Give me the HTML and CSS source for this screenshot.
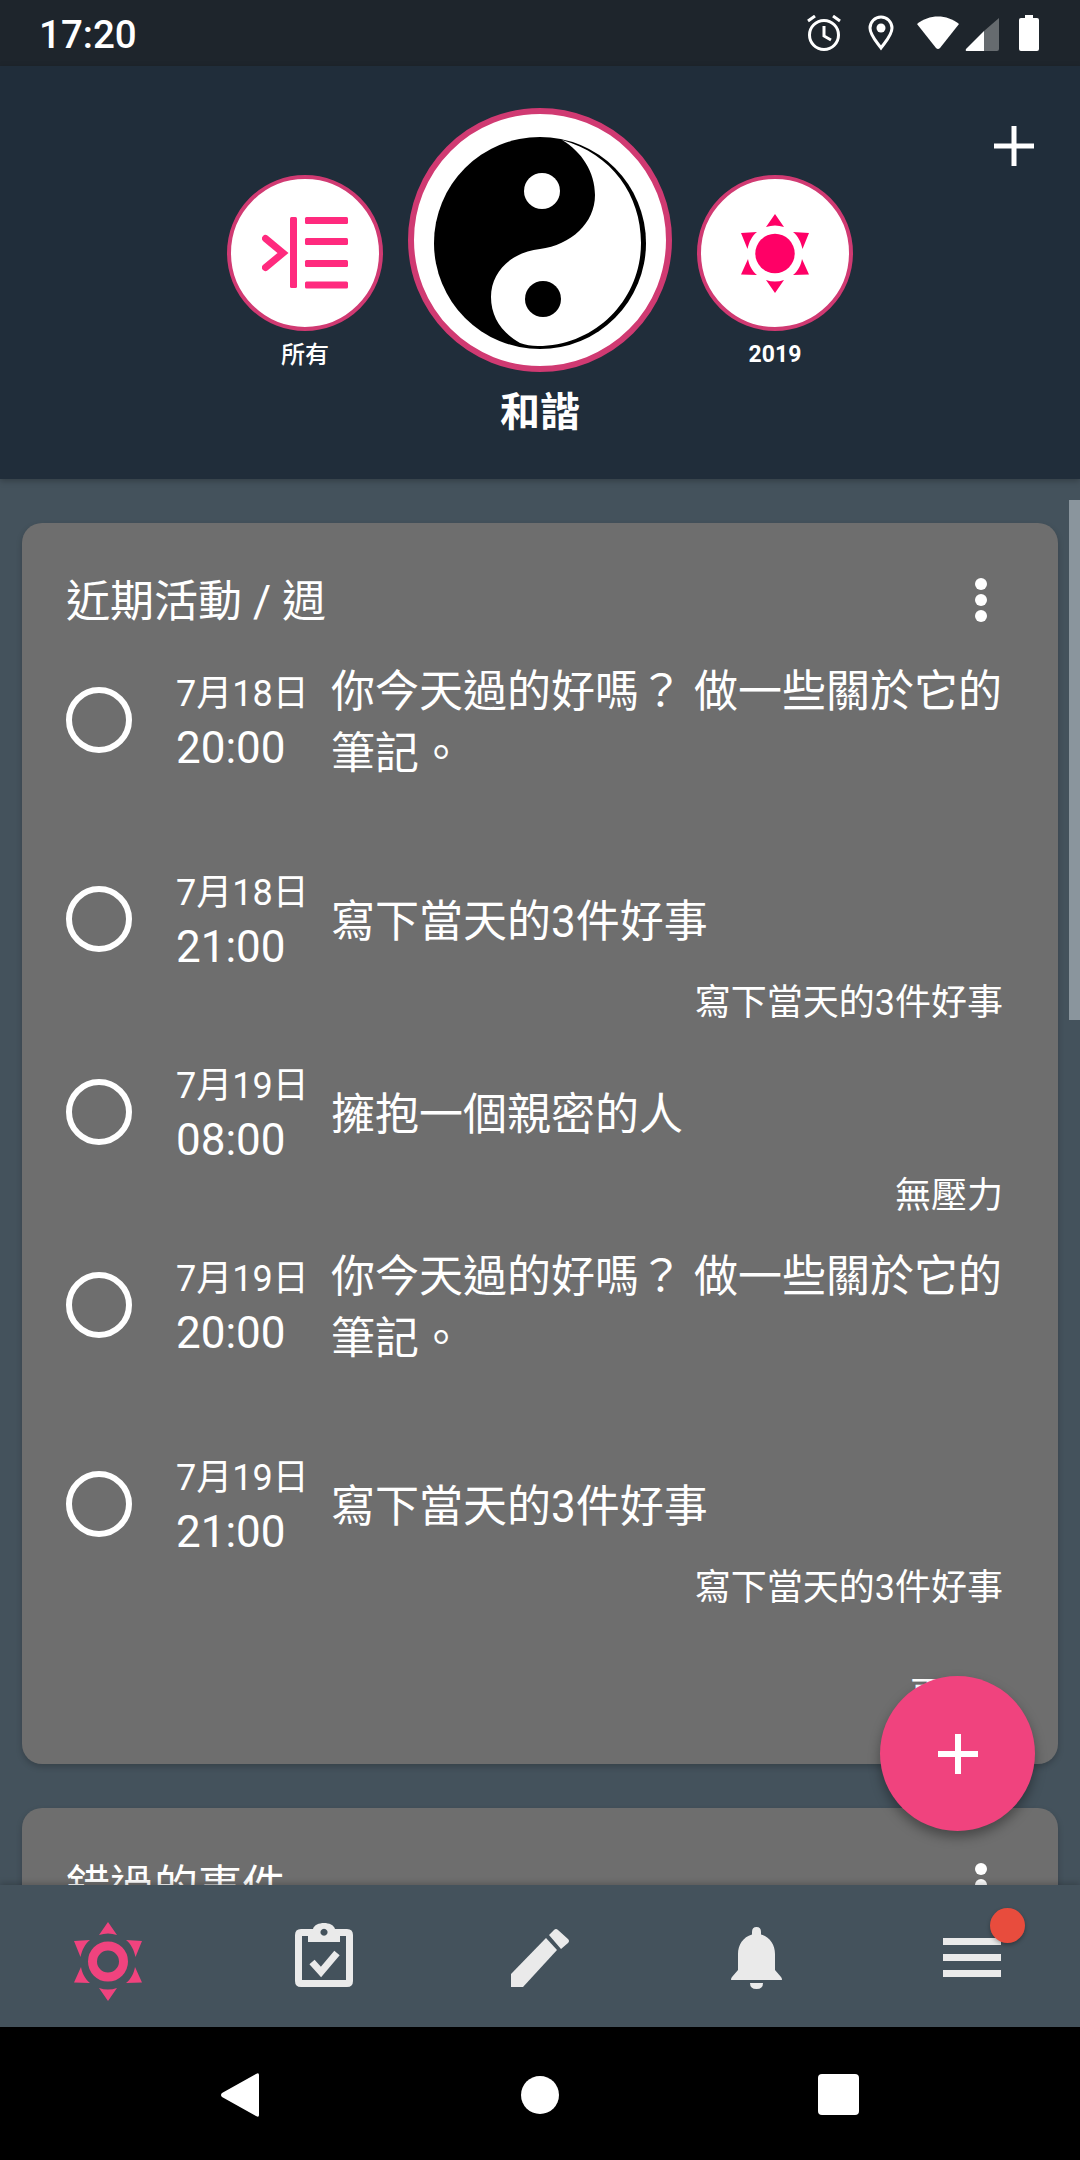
FILE: index.html
```html
<!DOCTYPE html>
<html lang="zh-Hant">
<head>
  <meta charset="UTF-8" />
  <meta name="viewport" content="width=device-width, initial-scale=1.0" />
  <title>和諧</title>
  <link rel="stylesheet" href="styles.css">
</head>

<body>
  <svg class="defs" width="0" height="0">
    <symbol id="sun" viewBox="0 0 68 79">
      <path d="M34 0 L43 13 Q34 10 25 13 Z" />
      <path d="M34 79 L43 66 Q34 69 25 66 Z" />
      <path d="M0 19 L16 18 C11 22 8 28 6.500 35 Z" />
      <path d="M68 19 L52 18 C57 22 60 28 61.500 35 Z" />
      <path d="M0 60.500 L16 61 C11 57 8 51 7 45 Z" />
      <path d="M68 60.500 L52 61 C57 57 60 51 61 45 Z" />
    </symbol>
  </svg>

  <div class="page">
    <div class="status-bar">
      <span class="clock">17:20</span>
      <div class="status-icons">
        <svg class="icon-alarm" viewBox="0 0 34 36"><path d="M1 6 L8 1 M33 6 L26 1" /><circle cx="17" cy="20" r="14.500" /><path d="M17 11 V21 L24 25" /></svg>
        <svg class="icon-pin" viewBox="0 0 26 36"><path d="M13 33 C8 26 2 20 2 13 A11 11 0 0 1 24 13 C24 20 18 26 13 33 Z" /><circle class="solid" cx="13" cy="13" r="4.500" /></svg>
        <svg class="icon-wifi" viewBox="0 0 42 34"><path d="M0 8 C12 -2 30 -2 42 8 L23 32 Q21 34 19 32 Z" /></svg>
        <svg class="icon-signal" viewBox="0 0 34 34"><path class="dim" d="M34 1 V32 Q34 34 32 34 H19 V14 Z" /><path d="M19 14 V34 H2 Q0 34 1 32 Z" /></svg>
        <svg class="icon-battery" viewBox="0 0 20 36"><path d="M6 0 H14 V3 H18 Q20 3 20 5 V34 Q20 36 18 36 H2 Q0 36 0 34 V5 Q0 3 2 3 H6 Z" /></svg>
      </div>
    </div>

    <header class="top-bar">
      <div class="goal goal-side">
        <div class="ring ring-small">
          <svg class="icon-list" viewBox="0 0 86 72">
            <path class="chev" d="M3.500 21.500 L21 36 L3.500 50.500" />
            <rect x="28" y="0" width="7" height="71" rx="1.500" />
            <rect x="43" y="0" width="43" height="7" rx="1.500" />
            <rect x="43" y="21" width="43" height="7" rx="1.500" />
            <rect x="43" y="43" width="43" height="7" rx="1.500" />
            <rect x="43" y="64.500" width="43" height="7" rx="1.500" />
          </svg>
        </div>
        <span class="goal-label">所有</span>
      </div>

      <div class="goal goal-main">
        <div class="ring ring-big">
          <svg class="icon-yin" viewBox="0 0 212 212">
            <circle cx="106" cy="106" r="106" />
            <path class="white" d="M128 3 C178 17 207 58 207 106 C207 163 161 209 104 209 Q94 209 86 206 C68 196 57 180 57 160 C57 134 78 115 106 112 C137 108 161 86 161 58 C161 35 148 15 128 3 Z" />
            <circle class="white" cx="108" cy="54" r="18" />
            <circle cx="109" cy="162" r="18" />
          </svg>
        </div>
        <span class="goal-title">和諧</span>
      </div>

      <div class="goal goal-side">
        <div class="ring ring-small">
          <svg class="icon-sun" viewBox="0 0 68 79"><use href="#sun" /><circle cx="34" cy="39.500" r="19.700" /></svg>
        </div>
        <span class="goal-label goal-year">2019</span>
      </div>

      <svg class="header-add" viewBox="0 0 40 40"><path d="M20 0 V40 M0 20 H40" /></svg>
    </header>

    <main class="content">
      <section class="card card-first">
        <div class="card-head">
          <h2>近期活動 / 週</h2>
          <div class="dots"><i></i><i></i><i></i></div>
        </div>

        <div class="event event-long">
          <div class="event-row">
            <span class="radio"></span>
            <div class="when"><span class="date">7月18日</span><span class="time">20:00</span></div>
            <p class="what">你今天過的好嗎？ 做一些關於它的筆記。</p>
          </div>
        </div>

        <div class="event">
          <div class="event-row">
            <span class="radio"></span>
            <div class="when"><span class="date">7月18日</span><span class="time">21:00</span></div>
            <p class="what">寫下當天的3件好事</p>
          </div>
          <p class="note">寫下當天的3件好事</p>
        </div>

        <div class="event">
          <div class="event-row">
            <span class="radio"></span>
            <div class="when"><span class="date">7月19日</span><span class="time">08:00</span></div>
            <p class="what">擁抱一個親密的人</p>
          </div>
          <p class="note">無壓力</p>
        </div>

        <div class="event event-long">
          <div class="event-row">
            <span class="radio"></span>
            <div class="when"><span class="date">7月19日</span><span class="time">20:00</span></div>
            <p class="what">你今天過的好嗎？ 做一些關於它的筆記。</p>
          </div>
        </div>

        <div class="event">
          <div class="event-row">
            <span class="radio"></span>
            <div class="when"><span class="date">7月19日</span><span class="time">21:00</span></div>
            <p class="what">寫下當天的3件好事</p>
          </div>
          <p class="note">寫下當天的3件好事</p>
        </div>

        <p class="more">更多</p>
      </section>

      <section class="card">
        <div class="card-head">
          <h2>錯過的事件</h2>
          <div class="dots"><i></i><i></i><i></i></div>
        </div>
      </section>

      <div class="scroll-thumb"></div>
      <div class="fab"><svg viewBox="0 0 40 40"><path d="M20 0 V40 M0 20 H40" /></svg></div>
    </main>

    <nav class="tab-bar">
      <div class="tab">
        <svg class="icon-tab-sun" viewBox="0 0 68 79"><use href="#sun" /><circle cx="34" cy="39.500" r="15.500" /></svg>
      </div>
      <div class="tab">
        <svg class="icon-clip" viewBox="0 0 58 64">
          <path fill-rule="evenodd" d="M6 6 H18 C20 -2 38 -2 40 6 H52 Q58 6 58 12 V58 Q58 64 52 64 H6 Q0 64 0 58 V12 Q0 6 6 6 Z M7 13 V57 H51 V13 H45 V19 H13 V13 Z M29 5.800 A3.500 3.500 0 1 0 29.010 5.800 Z" />
          <path class="tick" d="M17 39 L26 49 L42 30" />
        </svg>
      </div>
      <div class="tab">
        <svg class="icon-pencil" viewBox="0 0 58 58"><path d="M0 45 L35 9 L46 21 L12 58 H0 Z" /><path d="M38 6 L43 1 Q45 -1 47 1 L57 10 Q59 12 57 14 L50 20 Z" /></svg>
      </div>
      <div class="tab">
        <svg class="icon-bell" viewBox="0 0 51 62"><path d="M25.500 0 Q30 0 30 5 V7.500 C39 10 44 18 44 27 V43 L50 50 Q51 51 51 53 H0 Q0 51 1 50 L7 43 V27 C7 18 12 10 21 7.500 V5 Q21 0 25.500 0 Z" /><path d="M19 56 H32 Q32 62 25.500 62 Q19 62 19 56 Z" /></svg>
      </div>
      <div class="tab tab-menu">
        <div class="menu-lines"><i></i><i></i><i></i></div>
        <span class="badge"></span>
      </div>
    </nav>

    <div class="nav-bar">
      <svg class="nav-back" viewBox="0 0 38 44"><path d="M38 2 V42 Q38 45 35 43 L1 24 Q-1 22 1 20 L35 1 Q38 -1 38 2 Z" /></svg>
      <span class="nav-home"></span>
      <span class="nav-recent"></span>
    </div>
  </div>
</body>
</html>
```

FILE: styles.css
```css
* {
  box-sizing: border-box;
}

body {
  margin: 0;
  font-family: Roboto, 'Noto Sans CJK TC', sans-serif;
  color: #fff;
  background: #44525c;
}

h2, p {
  margin: 0;
  font-weight: 400;
}

.defs {
  position: absolute;
}

.page {
  width: 1080px;
  height: 2160px;
  display: flex;
  flex-direction: column;
  overflow: hidden;
}

/* status bar */
.status-bar {
  height: 66px;
  flex: none;
  display: flex;
  align-items: center;
  justify-content: space-between;
  padding: 0 41px 0 39px;
  background: #1e252c;
}

.clock {
  font-size: 38.500px;
  font-weight: 500;
  padding-top: 3px;
}

.status-icons {
  display: flex;
  align-items: center;
}

.status-icons svg {
  display: block;
  fill: #fff;
}

.icon-alarm {
  width: 34px;
  height: 36px;
  fill: none !important;
  stroke: #fff;
  stroke-width: 3;
  margin-right: 27px;
}

.icon-pin {
  width: 26px;
  height: 36px;
  fill: none !important;
  stroke: #fff;
  stroke-width: 3;
  margin-right: 23px;
}

.icon-pin .solid {
  fill: #fff;
  stroke: none;
}

.icon-wifi {
  width: 42px;
  height: 34px;
  margin-right: 6px;
}

.icon-signal {
  width: 34px;
  height: 34px;
  margin: 2px 20px 0 0;
}

.icon-signal .dim {
  fill: #666b6f;
}

.icon-battery {
  width: 20px;
  height: 36px;
}

/* goal switcher */
.top-bar {
  position: relative;
  height: 413px;
  flex: none;
  display: flex;
  justify-content: center;
  align-items: flex-start;
  gap: 25px;
  padding: 42px 0 0;
  background: #202d3a;
  box-shadow: 0 2px 6px rgba(0,0,0,0.25);
  z-index: 2;
}

.goal {
  display: flex;
  flex-direction: column;
  align-items: center;
}

.goal-side {
  margin-top: 67px;
}

.ring {
  display: flex;
  align-items: center;
  justify-content: center;
  border-radius: 50%;
  background: #fff;
  border-style: solid;
  border-color: #d03a72;
}

.ring-small {
  width: 156px;
  height: 156px;
  border-width: 4px;
}

.ring-big {
  width: 264px;
  height: 264px;
  border-width: 6px;
}

.goal-label {
  margin-top: 8px;
  font-size: 24px;
  line-height: 32px;
  font-weight: 500;
}

.goal-year {
  font-size: 23px;
  font-weight: 700;
}

.goal-title {
  margin-top: 13px;
  font-size: 40px;
  line-height: 56px;
  font-weight: 700;
}

.icon-list {
  width: 86px;
  height: 72px;
  fill: #ff2a7e;
}

.icon-list .chev {
  fill: none;
  stroke: #ff2a7e;
  stroke-width: 7;
  stroke-linecap: round;
}

.icon-yin {
  width: 212px;
  height: 212px;
  margin-top: 5px;
}

.icon-yin .white {
  fill: #fff;
}

.icon-sun {
  width: 68px;
  height: 79px;
  fill: #ff0066;
}

.header-add {
  position: absolute;
  left: 994px;
  top: 60px;
  width: 40px;
  height: 40px;
  stroke: #fff;
  stroke-width: 5;
}

/* cards */
.content {
  position: relative;
  flex: 1;
  overflow: hidden;
  padding: 44px 22px 0;
}

.card {
  background: #6e6e6e;
  border-radius: 20px;
  padding: 0 44px;
  box-shadow: 0 3px 6px rgba(0,0,0,0.2);
  margin-bottom: 44px;
  min-height: 200px;
}

.card-first {
  position: relative;
  height: 1241px;
}

.card-head {
  height: 135px;
  padding-top: 49px;
  display: flex;
  justify-content: space-between;
}

.card-head h2 {
  font-size: 44px;
  line-height: 60px;
}

.dots {
  display: flex;
  flex-direction: column;
  gap: 4px;
  margin: 6px 27px 0 0;
}

.dots i {
  width: 12px;
  height: 12px;
  border-radius: 50%;
  background: #fff;
}

.event {
  height: 193px;
}

.event-long {
  height: 199px;
}

.event-row {
  height: 124px;
  display: flex;
  align-items: center;
}

.radio {
  width: 66px;
  height: 66px;
  flex: none;
  border: 6px solid #fff;
  border-radius: 50%;
  margin-right: 44px;
}

.when {
  width: 155px;
  flex: none;
  display: flex;
  flex-direction: column;
  padding-top: 2px;
}

.date {
  font-size: 36px;
  line-height: 54px;
  white-space: nowrap;
}

.time {
  font-size: 44px;
  line-height: 54px;
}

.what {
  font-size: 44px;
  line-height: 62px;
  padding-top: 6px;
}

.note {
  margin-top: -1px;
  font-size: 36px;
  line-height: 46px;
  text-align: right;
  padding-right: 11px;
}

.more {
  position: absolute;
  right: 76px;
  top: 1150px;
  font-size: 36px;
  line-height: 46px;
}

.scroll-thumb {
  position: absolute;
  right: 0;
  top: 21px;
  width: 11px;
  height: 520px;
  background: #8a959d;
}

.fab {
  position: absolute;
  left: 880px;
  top: 1197px;
  width: 155px;
  height: 155px;
  border-radius: 50%;
  background: #f0437e;
  box-shadow: 0 6px 12px rgba(0,0,0,0.35);
  display: flex;
  align-items: center;
  justify-content: center;
}

.fab svg {
  width: 40px;
  height: 40px;
  stroke: #fff;
  stroke-width: 6;
}

/* bottom tabs */
.tab-bar {
  height: 142px;
  flex: none;
  display: flex;
  background: #44525c;
  box-shadow: 0 -2px 6px rgba(0,0,0,0.2);
  z-index: 2;
}

.tab {
  position: relative;
  flex: 1;
  display: flex;
  align-items: center;
  justify-content: center;
}

.icon-tab-sun {
  width: 68px;
  height: 79px;
  fill: #f0437e;
  margin-top: 11px;
}

.icon-tab-sun circle {
  fill: none;
  stroke: #f0437e;
  stroke-width: 9;
}

.icon-clip {
  width: 58px;
  height: 64px;
  fill: #eaeaea;
  margin-bottom: 2px;
}

.icon-clip .tick {
  fill: none;
  stroke: #eaeaea;
  stroke-width: 7;
}

.icon-pencil {
  width: 58px;
  height: 58px;
  fill: #eaeaea;
  margin-top: 3px;
}

.icon-bell {
  width: 51px;
  height: 62px;
  fill: #eaeaea;
  margin-top: 4px;
}

.menu-lines {
  display: flex;
  flex-direction: column;
  gap: 9px;
  margin-top: 3px;
}

.menu-lines i {
  display: block;
  width: 58px;
  height: 7px;
  background: #eaeaea;
}

.badge {
  position: absolute;
  left: 126px;
  top: 23px;
  width: 35px;
  height: 35px;
  border-radius: 50%;
  background: #e84c3d;
  box-shadow: 0 2px 4px rgba(0,0,0,0.3);
}

/* android nav */
.nav-bar {
  height: 133px;
  flex: none;
  display: flex;
  align-items: center;
  justify-content: center;
  padding: 2px 0 0;
  background: #000;
}

.nav-back {
  width: 38px;
  height: 44px;
  fill: #fff;
  margin-right: 262px;
}

.nav-home {
  width: 38px;
  height: 38px;
  border-radius: 50%;
  background: #fff;
  margin-right: 259px;
}

.nav-recent {
  width: 41px;
  height: 41px;
  border-radius: 4px;
  background: #fff;
}
```
